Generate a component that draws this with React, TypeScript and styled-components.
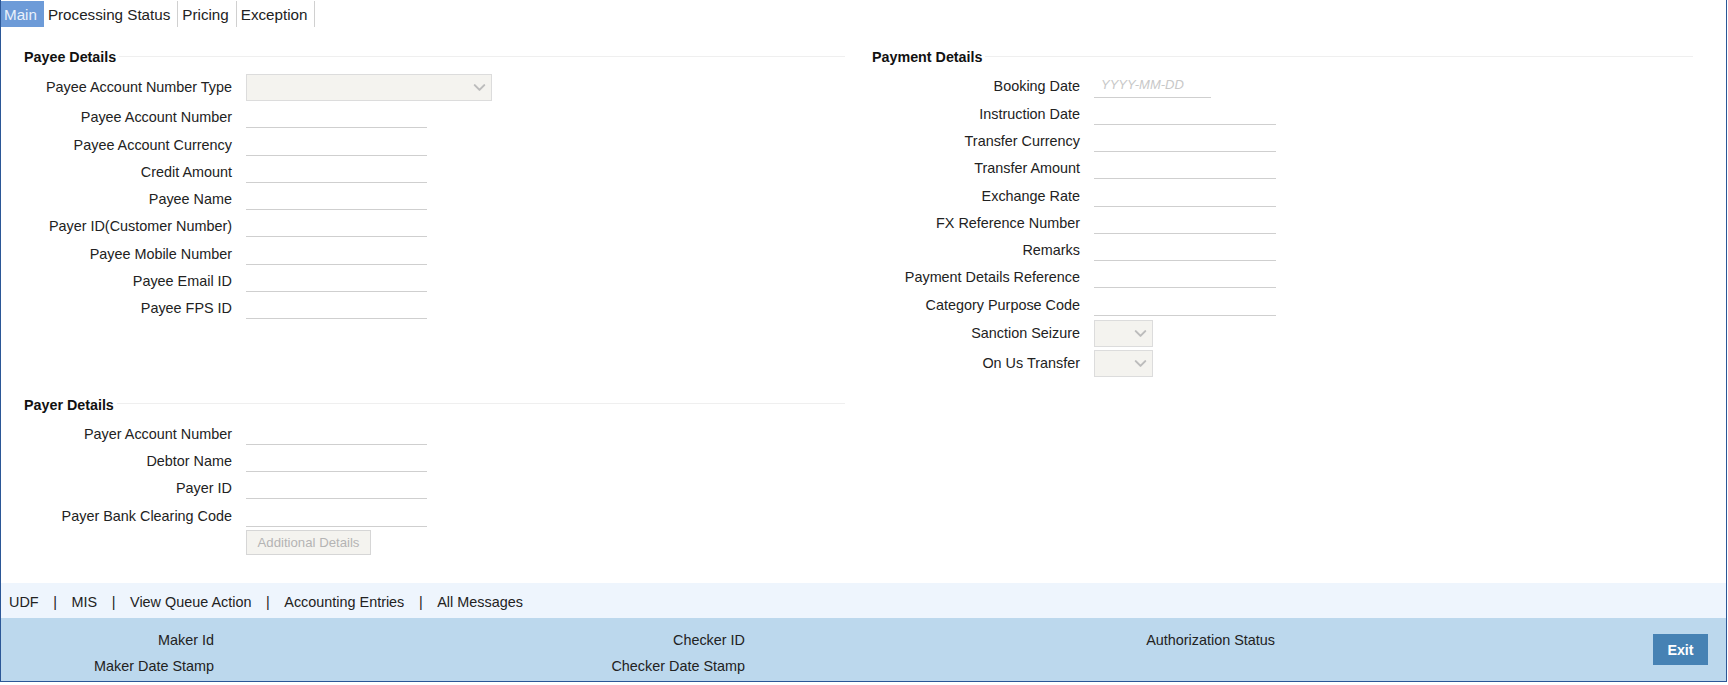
import React from 'react';
import styled, { createGlobalStyle } from 'styled-components';
import { ChevronDown } from 'lucide-react';

const GlobalStyle = createGlobalStyle`
  html, body {
    margin: 0;
    padding: 0;
    background: #fff;
  }
  * {
    box-sizing: border-box;
  }
  body {
    font-family: "Liberation Sans", Arial, sans-serif;
    font-size: 14.4px;
    color: #222;
  }
`;

const payeeRows = [
  'Payee Account Number',
  'Payee Account Currency',
  'Credit Amount',
  'Payee Name',
  'Payer ID(Customer Number)',
  'Payee Mobile Number',
  'Payee Email ID',
  'Payee FPS ID',
];

const payerRows = ['Payer Account Number', 'Debtor Name', 'Payer ID', 'Payer Bank Clearing Code'];

const paymentRows = [
  'Instruction Date',
  'Transfer Currency',
  'Transfer Amount',
  'Exchange Rate',
  'FX Reference Number',
  'Remarks',
  'Payment Details Reference',
  'Category Purpose Code',
];

const tabs = ['Main', 'Processing Status', 'Pricing', 'Exception'];
const links = ['UDF', 'MIS', 'View Queue Action', 'Accounting Entries', 'All Messages'];

const App = () => {
  return (
    <Frame>
      <GlobalStyle />
      <Tabs>
        {tabs.map((tab, i) => (
          <Tab key={tab} $active={i === 0}>{tab}</Tab>
        ))}
      </Tabs>

      <Content>
        <Column>
          <Section>
            <Legend>Payee Details</Legend>
            <SelectRow>
              <Label>Payee Account Number Type</Label>
              <SelectBox $width={246}>
                <ChevronDown size={19} strokeWidth={2.6} />
              </SelectBox>
            </SelectRow>
            {payeeRows.map((label) => (
              <Row key={label}>
                <Label>{label}</Label>
                <Field />
              </Row>
            ))}
          </Section>

          <PayerSection>
            <Legend>Payer Details</Legend>
            <PayerRows>
              {payerRows.map((label) => (
                <Row key={label}>
                  <Label>{label}</Label>
                  <Field />
                </Row>
              ))}
            </PayerRows>
            <ActionRow>
              <GhostButton disabled>Additional Details</GhostButton>
            </ActionRow>
          </PayerSection>
        </Column>

        <Column>
          <Section>
            <Legend>Payment Details</Legend>
            <Rows>
              <Row $first>
                <Label>Booking Date</Label>
                <DateField placeholder="YYYY-MM-DD" />
              </Row>
              {paymentRows.map((label) => (
                <Row key={label}>
                  <Label>{label}</Label>
                  <PaymentField />
                </Row>
              ))}
            </Rows>
            <SelectStack>
              <SelectRow>
                <Label>Sanction Seizure</Label>
                <SelectBox $width={59}>
                  <ChevronDown size={19} strokeWidth={2.6} />
                </SelectBox>
              </SelectRow>
              <SelectRow>
                <Label>On Us Transfer</Label>
                <SelectBox $width={59}>
                  <ChevronDown size={19} strokeWidth={2.6} />
                </SelectBox>
              </SelectRow>
            </SelectStack>
          </Section>
        </Column>
      </Content>

      <LinkBar>
        {links.map((link, i) => (
          <React.Fragment key={link}>
            {i > 0 && <Pipe>|</Pipe>}
            <span>{link}</span>
          </React.Fragment>
        ))}
      </LinkBar>

      <Footer>
        <Audit>
          <AuditLabel>Maker Id</AuditLabel>
          <AuditLabel>Maker Date Stamp</AuditLabel>
        </Audit>
        <Audit>
          <AuditLabel>Checker ID</AuditLabel>
          <AuditLabel>Checker Date Stamp</AuditLabel>
        </Audit>
        <Audit>
          <AuditLabel>Authorization Status</AuditLabel>
        </Audit>
        <ExitButton>Exit</ExitButton>
      </Footer>
    </Frame>
  );
};

export default App;

const Frame = styled.div`
  width: 1727px;
  height: 682px;
  display: flex;
  flex-direction: column;
  border: 1px solid #2b5797;
  border-top: 0;
  background: #fff;
`;

const Tabs = styled.div`
  display: flex;
  height: 26px;
  margin-top: 1px;
  flex: none;
`;

const Tab = styled.div<{ $active?: boolean }>`
  padding: 0 7px 0 ${(p) => (p.$active ? '3px' : '4px')};
  line-height: 27px;
  font-size: 15.2px;
  color: ${(p) => (p.$active ? '#e9f1fb' : '#222')};
  background: ${(p) => (p.$active ? '#6d9bd8' : 'transparent')};
  border-right: ${(p) => (p.$active ? '0' : '1px solid #d0d0d0')};
`;

const Content = styled.div`
  flex: 1;
  display: grid;
  grid-template-columns: 844px 844px;
  column-gap: 4px;
  padding-top: 19px;
`;

const Column = styled.div`
  display: flex;
  flex-direction: column;
`;

const Section = styled.section`
  display: flex;
  flex-direction: column;
`;

const PayerSection = styled(Section)`
  margin-top: 74.75px;
`;

const Legend = styled.div`
  display: flex;
  align-items: center;
  height: 22px;
  margin-left: 23px;
  font-weight: bold;
  font-size: 14.3px;
  color: #111;

  &::after {
    content: '';
    flex: 1;
    height: 1px;
    margin: -2px 0 0 3px;
    background: #efefef;
  }
`;

const Rows = styled.div`
  display: flex;
  flex-direction: column;
`;

const PayerRows = styled(Rows)`
  margin-top: 1.75px;
`;

const Label = styled.label`
  flex: none;
  width: 231px;
  text-align: right;
  line-height: 18px;
  padding-top: 7.25px;
`;

const Row = styled.div<{ $first?: boolean }>`
  display: flex;
  height: ${(p) => (p.$first ? '29.5px' : '27.25px')};

  ${Label} {
    padding-top: ${(p) => (p.$first ? '9px' : '7.25px')};
  }
`;

const Field = styled.input`
  width: 181px;
  height: 100%;
  margin-left: 14px;
  border: 0;
  border-bottom: 1px solid #cfcfcf;
  background: transparent;
  outline: none;
`;

const PaymentField = styled(Field)`
  width: 182px;
`;

const DateField = styled(Field)`
  width: 117px;
  padding: 5px 0 0 7px;
  font-family: inherit;
  font-size: 13px;
  font-style: italic;

  &::placeholder {
    color: #c8c8c8;
    opacity: 1;
  }
`;

const SelectRow = styled.div`
  display: flex;
  align-items: center;
  margin-top: 6px;
  flex: none;

  ${Label} {
    padding: 0 0 2px;
  }
`;

const SelectStack = styled.div`
  display: flex;
  flex-direction: column;
  gap: 3px;
  margin-top: 4.5px;

  ${SelectRow} {
    margin-top: 0;
  }
`;

const SelectBox = styled.div<{ $width: number }>`
  display: flex;
  align-items: center;
  justify-content: flex-end;
  width: ${(p) => p.$width}px;
  height: 27px;
  margin-left: 14px;
  padding-right: 2.5px;
  background: #f4f3ef;
  border: 1px solid #dcdcdc;
  color: #bcbcbc;
`;

const ActionRow = styled.div`
  margin: 3.75px 0 0 245px;
`;

const GhostButton = styled.button`
  display: block;
  width: 125px;
  height: 24.5px;
  padding: 0;
  font-family: inherit;
  font-size: 13.2px;
  color: #b4b4b4;
  background: #f4f3ef;
  border: 1px solid #d6d6d6;
`;

const LinkBar = styled.div`
  flex: none;
  display: flex;
  align-items: center;
  height: 35px;
  padding: 2px 0 0 8px;
  background: #eef5fd;
`;

const Pipe = styled.span`
  margin: 0 14.6px;
`;

const Footer = styled.div`
  flex: none;
  display: flex;
  height: 63px;
  padding-top: 8.5px;
  background: #bcd8ed;
`;

const Audit = styled.div`
  flex: none;
  width: 531px;
  display: flex;
  flex-direction: column;

  &:nth-child(2) {
    width: 530px;
  }
`;

const AuditLabel = styled.div`
  width: 213px;
  height: 26px;
  line-height: 26px;
  text-align: right;
`;

const ExitButton = styled.button`
  align-self: flex-start;
  width: 55px;
  height: 31px;
  margin: 7.5px 18px 0 auto;
  padding: 0;
  border: 0;
  font-family: inherit;
  font-size: 14.3px;
  font-weight: bold;
  color: #fff;
  background: #4682b4;
`;
